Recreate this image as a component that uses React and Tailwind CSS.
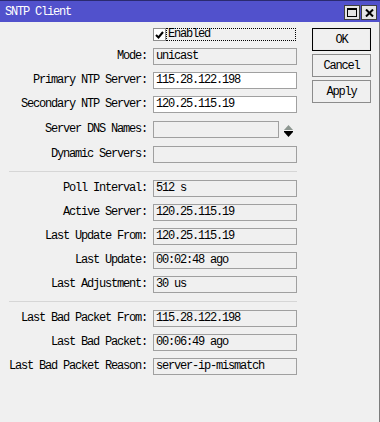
import React from 'react';

const font = "font-['Liberation_Mono',monospace] text-[12px] tracking-[-1.2px] text-black";

function Field({ label, value, white, narrow, mt }) {
  return (
    <div className={`flex items-center h-[17px] ${mt}`}>
      <div className="w-[147px] shrink-0 text-right whitespace-nowrap leading-[17px]">{label}</div>
      <div
        className={`ml-[6px] shrink-0 h-[17px] border border-[#a0a0a0] pl-[2px] leading-[15px] whitespace-nowrap ${
          white ? 'bg-white' : 'bg-[#f0f0f0]'
        } ${narrow ? 'w-[126px]' : 'w-[144px]'}`}
      >
        {value}
      </div>
      {narrow && (
        <svg width="11" height="14" viewBox="0 0 11 14" className="ml-[4px] shrink-0">
          <polygon points="5.5,2 10,7 1,7" fill="#8c9690" />
          <rect x="1" y="8" width="9" height="1" fill="#000" />
          <polygon points="1,9 10,9 5.5,14" fill="#000" />
        </svg>
      )}
    </div>
  );
}

function Sep() {
  return <div className="ml-[9px] mt-[8px] w-[288px] border-t border-[#d6d6d6]" />;
}

function Btn({ children, main, mt }) {
  return (
    <div
      className={`h-[23px] w-[59px] flex items-center justify-center bg-[#f0f0f0] ${mt} ${
        main ? 'border border-black shadow-[inset_0_0_0_1px_#ececec]' : 'border border-[#8c8c8c]'
      }`}
    >
      {children}
    </div>
  );
}

export default function App() {
  return (
    <div className={`w-[380px] h-[422px] bg-[#f0f0f0] flex flex-col ${font}`}>
      {/* title bar */}
      <div className="h-[22px] bg-[#5151cc] border-t border-[#2a2a70] flex items-center justify-between">
        <span className="ml-[5px] text-white text-[12px]">SNTP Client</span>
        <div className="flex items-center gap-[1px] mr-[3px] mt-[2px]">
          <div className="w-[16px] h-[15px] bg-[#e4e4e4] border border-[#404040] flex items-center justify-center">
            <svg width="10" height="9" viewBox="0 0 10 9">
              <rect x="0.5" y="0.5" width="9" height="8" fill="none" stroke="#000" />
              <rect x="0" y="0" width="10" height="2" fill="#000" />
            </svg>
          </div>
          <div className="w-[16px] h-[15px] bg-[#e4e4e4] border border-[#404040] flex items-center justify-center">
            <svg width="9" height="8" viewBox="0 0 9 8">
              <path d="M1 0.5 L8 7.5 M8 0.5 L1 7.5" stroke="#000" strokeWidth="2" />
            </svg>
          </div>
        </div>
      </div>

      <div className="flex-1 flex border-r border-[#7c7c7c]">
        {/* form */}
        <div className="w-[312px] shrink-0 pt-[6px] flex flex-col">
          <div className="flex items-center h-[13px] pl-[153px]">
            <div className="w-[13px] h-[13px] shrink-0 border border-[#8e8e8e] bg-white flex items-center justify-center">
              <svg width="9" height="8" viewBox="0 0 9 8">
                <path d="M1 4 L3.5 6.5 L8 1" fill="none" stroke="#000" strokeWidth="2" />
              </svg>
            </div>
            <div className="w-[130px] shrink-0 h-[13px] border border-dotted border-black leading-[11px] pl-[1px]">Enabled</div>
          </div>

          <Field label="Mode:" value="unicast" mt="mt-[7px]" />
          <Field label="Primary NTP Server:" value="115.28.122.198" white mt="mt-[7px]" />
          <Field label="Secondary NTP Server:" value="120.25.115.19" white mt="mt-[7px]" />
          <Field label="Server DNS Names:" value="" narrow mt="mt-[8px]" />
          <Field label="Dynamic Servers:" value="" mt="mt-[8px]" />

          <Sep />

          <Field label="Poll Interval:" value="512 s" mt="mt-[8px]" />
          <Field label="Active Server:" value="120.25.115.19" mt="mt-[7px]" />
          <Field label="Last Update From:" value="120.25.115.19" mt="mt-[7px]" />
          <Field label="Last Update:" value="00:02:48 ago" mt="mt-[7px]" />
          <Field label="Last Adjustment:" value="30 us" mt="mt-[7px]" />

          <Sep />

          <Field label="Last Bad Packet From:" value="115.28.122.198" mt="mt-[8px]" />
          <Field label="Last Bad Packet:" value="00:06:49 ago" mt="mt-[7px]" />
          <Field label="Last Bad Packet Reason:" value="server-ip-mismatch" mt="mt-[7px]" />
        </div>

        {/* buttons */}
        <div className="pt-[6px] flex flex-col">
          <Btn main mt="">OK</Btn>
          <Btn mt="mt-[3px]">Cancel</Btn>
          <Btn mt="mt-[3px]">Apply</Btn>
        </div>
      </div>
    </div>
  );
}
